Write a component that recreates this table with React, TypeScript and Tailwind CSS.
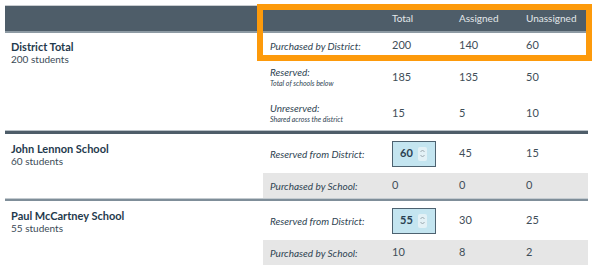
import React from 'react'

const font = { fontFamily: 'Lato, "Open Sans", sans-serif' }

function Spinner() {
  return (
    <span className="flex h-[14px] w-[9px] items-center justify-center rounded-[2px] bg-[#e3f1f6]">
      <svg width="7" height="11" viewBox="0 0 7 11" fill="none" stroke="#9aa7ae" strokeWidth="1">
        <path d="M1.5 4 L3.5 2 L5.5 4" />
        <path d="M1.5 7 L3.5 9 L5.5 7" />
      </svg>
    </span>
  )
}

function NumInput({ value }: { value: string }) {
  return (
    <div className="ml-[7px] flex h-[26px] w-[44px] items-center justify-between border border-[#4d6270] bg-[#c4e5f0] pl-[7px] pr-[8px] text-[11px] font-bold text-[#2a4150]">
      <span>{value}</span>
      <Spinner />
    </div>
  )
}

const cols = 'grid grid-cols-[258px_122px_67px_67px_69px]'

function Label({ main, sub }: { main: string; sub?: string }) {
  return (
    <div className="pl-[7px] text-[#2f4452]">
      <div className="text-[10px] italic leading-[12px]">{main}</div>
      {sub && <div className="text-[7px] italic leading-[10px]">{sub}</div>}
    </div>
  )
}

function Num({ v }: { v: string }) {
  return <div className="pl-[7px] text-[11px] text-[#3f4e59]">{v}</div>
}

function School({ name, students, value, assigned, unassigned, purchased }: {
  name: string
  students: string
  value: string
  assigned: string
  unassigned: string
  purchased: string[]
}) {
  return (
    <div className={cols}>
      <div className="row-span-2 pl-[6px] pt-[8px]">
        <div className="text-[11px] font-bold leading-[13px] text-[#1f3a4d]">{name}</div>
        <div className="text-[10px] leading-[12px] text-[#3a4a56]">{students}</div>
      </div>
      <div className="col-span-4 grid h-[39px] grid-cols-[122px_67px_67px_69px] items-center">
        <Label main="Reserved from District:" />
        <NumInput value={value} />
        <Num v={assigned} />
        <Num v={unassigned} />
      </div>
      <div className="col-span-4 grid h-[25px] grid-cols-[122px_67px_67px_69px] items-center bg-[#e6e6e6]">
        <Label main="Purchased by School:" />
        {purchased.map((p, i) => (
          <Num key={i} v={p} />
        ))}
      </div>
    </div>
  )
}

export default function App() {
  return (
    <div className="relative h-[270px] w-[597px] overflow-hidden bg-white" style={font}>
      <div className="ml-[5px] mt-[5px] w-[583px]">
        <div className={`${cols} h-[28px] items-center border-t border-[#c9cdd1] border-b-2 border-b-[#8d9aa3] bg-[#4e5d69] text-[10px] text-[#e3e8eb]`}>
          <div />
          <div />
          <div className="pl-[7px]">Total</div>
          <div className="pl-[7px]">Assigned</div>
          <div className="pl-[7px]">Unassigned</div>
        </div>

        <div className={cols}>
          <div className="row-span-3 pl-[6px] pt-[7px]">
            <div className="text-[11px] font-bold leading-[13px] text-[#1f3a4d]">District Total</div>
            <div className="text-[10px] leading-[12px] text-[#3a4a56]">200 students</div>
          </div>
          <div className="col-span-4 grid h-[25px] grid-cols-[122px_67px_67px_69px] items-center">
            <Label main="Purchased by District:" />
            <Num v="200" />
            <Num v="140" />
            <Num v="60" />
          </div>
          <div className="col-span-4 grid h-[38px] grid-cols-[122px_67px_67px_69px] items-center">
            <Label main="Reserved:" sub="Total of schools below" />
            <Num v="185" />
            <Num v="135" />
            <Num v="50" />
          </div>
          <div className="col-span-4 grid h-[34px] grid-cols-[122px_67px_67px_69px] items-center">
            <Label main="Unreserved:" sub="Shared across the district" />
            <Num v="15" />
            <Num v="5" />
            <Num v="10" />
          </div>
        </div>

        <div className="h-[4px] border-t border-[#b9c1c7] bg-[#4e5d69]" />

        <School name="John Lennon School" students="60 students" value="60" assigned="45" unassigned="15" purchased={['0', '0', '0']} />

        <div className="h-[3px] border-t border-[#c4cbd0] bg-[#7f8e99]" />

        <School name="Paul McCartney School" students="55 students" value="55" assigned="30" unassigned="25" purchased={['10', '8', '2']} />
      </div>

      <div className="absolute left-[257px] top-[4px] h-[57px] w-[335px] border-[6px] border-[#fd9a0b]" />
    </div>
  )
}
